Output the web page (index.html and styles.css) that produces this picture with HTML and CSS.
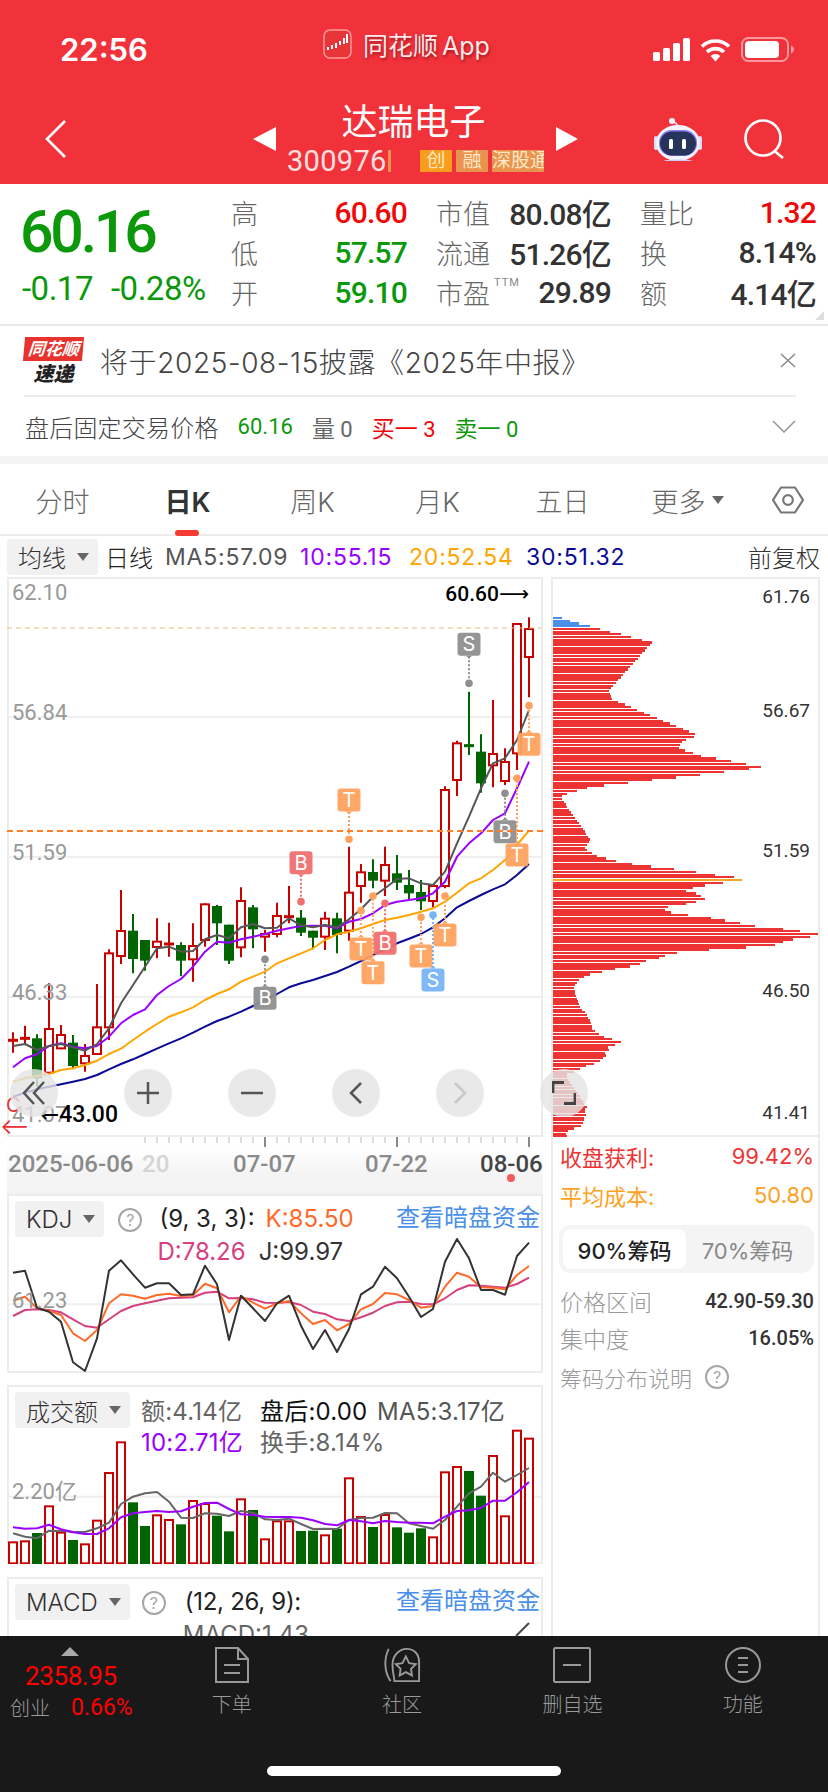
FILE: index.html
```html
<!DOCTYPE html>
<html lang="zh-CN">
<head>
  <meta charset="UTF-8" />
  <meta name="viewport" content="width=device-width, initial-scale=1" />
  <title>达瑞电子</title>
  <link rel="stylesheet" href="styles.css">
</head>
<body>

  <!-- Red header -->
  <header class="topbar">
    <div class="statusbar">
      <div class="time">22:56</div>
      <div class="app-badge">
        <svg class="app-icon" viewBox="0 0 29 30">
          <rect x="1" y="1" width="27" height="28" rx="6" fill="#e8353a" stroke="#ff9a9a" stroke-width="1.5"/>
          <path d="M5 18v3M9 16v4M13 14v5M17 12v4M21 9v6M24 5v9" stroke="#fff" stroke-width="2"/>
        </svg>
        <span>同花顺 App</span>
      </div>
      <div class="status-icons">
        <svg class="signal" viewBox="0 0 37 23" fill="#fff">
          <rect x="0" y="14" width="7" height="9" rx="1.5"/>
          <rect x="10" y="10" width="7" height="13" rx="1.5"/>
          <rect x="20" y="5" width="7" height="18" rx="1.5"/>
          <rect x="30" y="0" width="7" height="23" rx="1.5"/>
        </svg>
        <svg class="wifi" viewBox="0 0 31 24" fill="none" stroke="#fff" stroke-width="3.6">
          <path d="M2 8.5a19.5 19.5 0 0 1 27 0"/>
          <path d="M7 14a12.4 12.4 0 0 1 17 0"/>
          <path d="M15.5 23.5l-4.8-5.6a7 7 0 0 1 9.6 0z" fill="#fff" stroke="none"/>
        </svg>
        <svg class="battery" viewBox="0 0 53 25">
          <rect x="1" y="1" width="46" height="23" rx="6.5" fill="none" stroke="#fff" stroke-opacity=".5" stroke-width="2"/>
          <rect x="4" y="4" width="34" height="17" rx="4" fill="#fff"/>
          <path d="M50 8.5c2 .8 3 2.2 3 4s-1 3.2-3 4z" fill="#fff" fill-opacity=".5"/>
        </svg>
      </div>
    </div>

    <div class="navbar">
      <svg class="nav-back" viewBox="0 0 21 38" fill="none" stroke="#fff" stroke-width="2.6"><path d="M20 1L2 19l18 18"/></svg>
      <div class="nav-arrow prev"></div>
      <div class="stock">
        <div class="stock-name">达瑞电子</div>
        <div class="stock-meta">
          <span class="stock-code">300976</span>
          <i class="code-bar"></i>
          <span class="tag first">创</span>
          <span class="tag">融</span>
          <span class="tag long">深股通</span>
        </div>
      </div>
      <div class="nav-arrow next"></div>
      <svg class="robot" viewBox="0 0 48 44">
        <path d="M18 5c3 0 5 1 6 5" fill="none" stroke="#f1f2ff" stroke-width="1.6"/>
        <circle cx="18" cy="4" r="3" fill="#f1f2ff"/>
        <rect x="0" y="19" width="4" height="14" rx="2" fill="#d9ddf8"/>
        <rect x="44" y="19" width="4" height="14" rx="2" fill="#d9ddf8"/>
        <ellipse cx="24" cy="26" rx="22" ry="18" fill="#f3f4ff"/>
        <path d="M9 44c5-2 25-2 30 0-8 1-22 1-30 0z" fill="#c9cdf5"/>
        <rect x="5" y="13" width="38" height="26" rx="12.500" fill="#8f7bf0"/>
        <rect x="6" y="14.500" width="36" height="24" rx="12" fill="#26345c"/>
        <rect x="15" y="22" width="4" height="10" rx="1.500" fill="#fff"/>
        <rect x="28" y="22" width="4" height="10" rx="1.500" fill="#fff"/>
      </svg>
      <svg class="search" viewBox="0 0 40 40" fill="none" stroke="#fff" stroke-width="2.700"><circle cx="19" cy="19" r="17.500"/><path d="M31 32.500l8 6.500"/></svg>
    </div>
  </header>

  <!-- Price summary -->
  <section class="quote">
    <div class="price-box">
      <div class="price">60.16</div>
      <div class="change"><span>-0.17</span><span>-0.28%</span></div>
    </div>
    <div class="stats">
      <div class="stat"><span class="stat-title">高</span><span class="num up">60.60</span></div>
      <div class="stat"><span class="stat-title">市值</span><span class="num">80.08亿</span></div>
      <div class="stat"><span class="stat-title">量比</span><span class="num up">1.32</span></div>
      <div class="stat"><span class="stat-title">低</span><span class="num down">57.57</span></div>
      <div class="stat"><span class="stat-title">流通</span><span class="num">51.26亿</span></div>
      <div class="stat"><span class="stat-title">换</span><span class="num">8.14%</span></div>
      <div class="stat"><span class="stat-title">开</span><span class="num down">59.10</span></div>
      <div class="stat"><span class="stat-title">市盈<sup class="ttm">TTM</sup></span><span class="num">29.89</span></div>
      <div class="stat"><span class="stat-title">额</span><span class="num">4.14亿</span></div>
    </div>
    <i class="corner"></i>
  </section>

  <!-- Notice and after-hours row -->
  <section class="notice">
    <div class="notice-main">
      <div class="logo">
        <div class="logo-tag">同花顺</div>
        <div class="logo-word">速递</div>
      </div>
      <div class="notice-text">将于2025-08-15披露《2025年中报》</div>
      <svg class="notice-close" viewBox="0 0 16 15" fill="none" stroke="#8d8d8d" stroke-width="1.6"><path d="M1 1l14 13M15 1L1 14"/></svg>
    </div>
    <div class="after-hours">
      <span class="after-title">盘后固定交易价格</span>
      <span class="num down">60.16</span>
      <span class="after-vol">量 <span class="num">0</span></span>
      <span class="up">买一 <span class="num">3</span></span>
      <span class="down">卖一 <span class="num">0</span></span>
      <svg class="after-open" viewBox="0 0 24 13" fill="none" stroke="#9a9a9a" stroke-width="1.6"><path d="M1 1l11 11L23 1"/></svg>
    </div>
  </section>

  <!-- Period tabs -->
  <nav class="tabs">
    <div class="tab">分时</div>
    <div class="tab active">日K</div>
    <div class="tab">周K</div>
    <div class="tab">月K</div>
    <div class="tab">五日</div>
    <div class="tab">更多<i class="caret small"></i></div>
    <svg class="hexagon" viewBox="0 0 32 28" fill="none" stroke="#777" stroke-width="2.200"><path d="M9 1.500h14L31 14l-8 12.500H9L1 14z"/><circle cx="16" cy="14" r="4.800"/></svg>
  </nav>

  <div class="ma-row">
    <div class="chip">均线<i class="caret"></i></div>
    <span class="ma-period">日线</span>
    <span class="ma ma5">MA5:57.09</span>
    <span class="ma ma10">10:55.15</span>
    <span class="ma ma20">20:52.54</span>
    <span class="ma ma30">30:51.32</span>
    <span class="adjust">前复权</span>
  </div>

  <main class="charts">
    <div class="left-col">
      <div class="panel kline">
        <svg id="klineChart" class="chart"></svg>
        <span class="axis-label l1">62.10</span>
        <span class="axis-label l2">56.84</span>
        <span class="axis-label l3">51.59</span>
        <span class="axis-label l4">46.33</span>
        <span class="axis-label l5">41.07</span>
        <span class="extreme high">60.60⟶</span>
        <span class="extreme low">←43.00</span>
        <span class="cursor-mark">C</span>
        <span class="cursor-arrow">⟵</span>
      </div>
      <svg id="timeAxis" class="time-axis"></svg>

      <div class="panel kdj">
        <svg id="kdjChart" class="chart"></svg>
        <div class="panel-head">
          <div class="chip">KDJ<i class="caret"></i></div>
          <span class="help">?</span>
          <div class="readings">
            <div><span class="params">(9, 3, 3):</span><span class="kdj-k">K:85.50</span></div>
            <div class="second"><span class="kdj-d">D:78.26</span><span class="kdj-j">J:99.97</span></div>
          </div>
          <span class="dark-pool">查看暗盘资金</span>
        </div>
        <span class="axis-label kdj-label">61.23</span>
      </div>

      <div class="panel volume">
        <svg id="volumeChart" class="chart"></svg>
        <div class="panel-head">
          <div class="chip">成交额<i class="caret"></i></div>
          <div class="readings vol-readings">
            <span class="vol-grey">额:4.14亿</span><span class="vol-black">盘后:0.00</span><span class="vol-ma">MA5:3.17亿</span>
            <span class="ma10">10:2.71亿</span><span class="vol-grey">换手:8.14%</span>
          </div>
        </div>
        <span class="axis-label vol-label">2.20亿</span>
      </div>

      <div class="panel macd">
        <svg id="macdChart" class="chart"></svg>
        <div class="panel-head">
          <div class="chip">MACD<i class="caret"></i></div>
          <span class="help">?</span>
          <div class="readings">
            <div><span class="params">(12, 26, 9):</span></div>
            <div class="second"><span class="vol-grey">MACD:1.43</span></div>
          </div>
          <span class="dark-pool">查看暗盘资金</span>
        </div>
      </div>
    </div>

    <div class="right-col">
      <div class="chips-panel">
        <svg id="chipChart" class="chart"></svg>
        <span class="chip-label c1">61.76</span>
        <span class="chip-label c2">56.67</span>
        <span class="chip-label c3">51.59</span>
        <span class="chip-label c4">46.50</span>
        <span class="chip-label c5">41.41</span>
      </div>
      <div class="chip-row profit"><span>收盘获利:</span><span>99.42%</span></div>
      <div class="chip-row cost"><span>平均成本:</span><span>50.80</span></div>
      <div class="segment">
        <div class="segment-item active">90%筹码</div>
        <div class="segment-item">70%筹码</div>
      </div>
      <div class="chip-row info"><span>价格区间</span><span class="info-value">42.90-59.30</span></div>
      <div class="chip-row info"><span>集中度</span><span class="info-value">16.05%</span></div>
      <div class="chip-help">筹码分布说明<span class="help">?</span></div>
    </div>

    <!-- Floating zoom and pan buttons -->
    <div class="zoom-controls">
      <div class="round first"><svg viewBox="0 0 24 24" fill="none" stroke="#555" stroke-width="2.500"><path d="M12 1L2 12l10 11M22 1L12 12l10 11"/></svg></div>
      <div class="round"><svg viewBox="0 0 24 24" fill="none" stroke="#555" stroke-width="2.500"><path d="M1 12h22M12 1v22"/></svg></div>
      <div class="round"><svg viewBox="0 0 24 24" fill="none" stroke="#555" stroke-width="2.500"><path d="M1 12h22"/></svg></div>
      <div class="round"><svg viewBox="0 0 24 24" fill="none" stroke="#555" stroke-width="2.500"><path d="M17 2L7 12l10 10"/></svg></div>
      <div class="round"><svg viewBox="0 0 24 24" fill="none" stroke="#c8c8c8" stroke-width="2.500"><path d="M7 2l10 10L7 22"/></svg></div>
      <div class="round"><svg viewBox="0 0 24 24" fill="none" stroke="#444" stroke-width="2.800"><path d="M1 12V1.500h11M23 12v10.500H12"/></svg></div>
    </div>
  </main>

  <!-- Bottom dock -->
  <footer class="dock">
    <div class="dock-row">
      <div class="index-box">
        <i class="index-arrow"></i>
        <div class="index-value">2358.95</div>
        <div class="index-line"><span class="index-name">创业</span><span class="index-pct">0.66%</span></div>
      </div>
      <div class="dock-item">
        <svg viewBox="0 0 36 36" fill="none" stroke="#999" stroke-width="2"><path d="M2 1h22l10 11v23H2zM24 1v11h10M10 18h16M10 26h16"/></svg>
        <span>下单</span>
      </div>
      <div class="dock-item">
        <svg viewBox="0 0 40 36" fill="none" stroke="#999" stroke-width="2"><path d="M6 1C1 11 1 25 8 35"/><path d="M12 35h26V15C38 6 32 1 25 1S10 7 10 18c0 8 2 13 2 17z"/><path d="M24 9l3.500 7 7 1-5 5 1 7-6.500-3.500L17.500 29l1-7-5-5 7-1z"/></svg>
        <span>社区</span>
      </div>
      <div class="dock-item">
        <svg viewBox="0 0 38 36" fill="none" stroke="#999" stroke-width="2"><rect x="1" y="1" width="36" height="34" rx="1.500"/><path d="M10 18h18"/></svg>
        <span>删自选</span>
      </div>
      <div class="dock-item">
        <svg viewBox="0 0 36 36" fill="none" stroke="#999" stroke-width="2"><circle cx="18" cy="18" r="17"/><path d="M13 11h10M13 18h10M13 25h10"/></svg>
        <span>功能</span>
      </div>
    </div>
    <div class="home-indicator"></div>
  </footer>

  <script src="chart.js"></script>
</body>
</html>
```

FILE: styles.css
```css
* {
  box-sizing: border-box;
}

body {
  width: 828px;
  height: 1792px;
  margin: 0;
  overflow: hidden;
  background-color: #fff;
  color: #333;
  font-family: Inter, "Noto Sans CJK SC", sans-serif;
}

i {
  display: block;
  font-style: normal;
}

.up {
  color: #f00808;
}

.down {
  color: #0b990b;
}

.num {
  font-family: Roboto, "Noto Sans CJK SC", sans-serif;
}

/* Header */
.topbar {
  height: 184px;
  background-color: #f2323b;
  color: #fff;
}

.statusbar {
  display: flex;
  align-items: center;
  height: 76px;
  padding: 23px 0 0 60px;
}

.time {
  width: 263px;
  font-size: 31px;
  font-weight: 600;
}

.app-badge {
  display: flex;
  align-items: center;
  width: 330px;
  margin-top: -12px;
  font-size: 25px;
  word-spacing: -3px;
  color: rgba(255, 255, 255, 0.92);
  text-shadow: 1px 2px 3px rgba(80, 0, 0, 0.5);
}

.app-icon {
  width: 29px;
  height: 30px;
  margin-right: 11px;
}

.status-icons {
  display: flex;
  align-items: center;
  gap: 10px;
}

.signal {
  width: 37px;
  height: 23px;
}

.wifi {
  width: 31px;
  height: 24px;
}

.battery {
  width: 53px;
  height: 25px;
}

.navbar {
  display: flex;
  align-items: center;
  height: 108px;
  padding-top: 17px;
}

.nav-back {
  width: 21px;
  height: 38px;
  margin-left: 45px;
}

.nav-arrow {
  width: 0;
  height: 0;
  border-top: 12.5px solid transparent;
  border-bottom: 12.5px solid transparent;
}

.nav-arrow.prev {
  margin-left: 187px;
  border-right: 23px solid #fff;
}

.nav-arrow.next {
  margin-left: 11px;
  border-left: 22px solid #fff;
}

.stock {
  width: 258px;
  margin-left: 11px;
}

.stock-name {
  margin: -4px 0 4px;
  padding-right: 5px;
  font-size: 36px;
  line-height: 44px;
  text-align: center;
}

.stock-meta {
  display: flex;
  align-items: center;
  height: 24px;
  margin-top: 5px;
  overflow: hidden;
}

.stock-code {
  width: 101px;
  font-family: Roboto, sans-serif;
  font-size: 29px;
  letter-spacing: 0.3px;
  color: #ffe0e0;
}

.code-bar {
  width: 3px;
  height: 22px;
  margin-right: 29px;
  background-color: #e8944e;
}

.tag {
  flex: none;
  width: 32px;
  height: 22px;
  margin-right: 4px;
  overflow: hidden;
  background-color: #e8944e;
  color: #ffe8c8;
  font-size: 19px;
  line-height: 22px;
  text-align: center;
}

.tag.first {
  background-color: #fa9d1c;
}

.tag.long {
  width: 52px;
  margin-right: 0;
  white-space: nowrap;
  text-align: left;
}

.robot {
  width: 48px;
  height: 44px;
  margin-left: 76px;
}

.search {
  width: 40px;
  height: 40px;
  margin-left: 42px;
}

/* Price summary */
.quote {
  position: relative;
  display: flex;
  height: 142px;
  border-bottom: 2px solid #e8e8e8;
}

.price-box {
  width: 231px;
  padding-left: 20px;
}

.price {
  margin-top: 17px;
  font-family: Roboto, sans-serif;
  font-size: 59px;
  font-weight: 500;
  line-height: 62px;
  letter-spacing: -3.200px;
  color: #0b990b;
}

.change {
  display: flex;
  gap: 18px;
  margin: 8px 0 0 2px;
  font-family: Roboto, sans-serif;
  font-size: 33px;
  letter-spacing: -0.500px;
  line-height: 36px;
  color: #0b990b;
}

.stats {
  display: grid;
  grid-template-columns: 176px 175px 176px;
  grid-auto-rows: 40px;
  column-gap: 29px;
  padding-top: 8px;
}

.stat {
  display: flex;
  justify-content: space-between;
  align-items: center;
}

.stat .num {
  font-size: 30px;
  font-weight: 500;
  letter-spacing: -0.800px;
}

.stat-title {
  position: relative;
  font-size: 27px;
  font-weight: 300;
  color: #666;
}

.ttm {
  position: absolute;
  left: 58px;
  top: 3px;
  font-family: Roboto, sans-serif;
  font-size: 11px;
  font-weight: 400;
  letter-spacing: 1px;
  color: #888;
}

.corner {
  position: absolute;
  right: 4px;
  bottom: 4px;
  border-left: 9px solid transparent;
  border-bottom: 9px solid #ddd;
}

/* Notice */
.notice-main {
  display: flex;
  align-items: center;
  height: 71px;
  margin: 0 32px 0 24px;
  border-bottom: 2px solid #ececec;
}

.logo {
  width: 59px;
  margin-right: 17px;
  text-align: center;
}

.logo-tag {
  height: 24px;
  background-color: #e8322d;
  color: #fff;
  font-size: 17px;
  font-style: italic;
  font-weight: 700;
  line-height: 24px;
  transform: skewX(-5deg);
}

.logo-word {
  margin-top: 2px;
  font-size: 20px;
  font-style: italic;
  font-weight: 900;
  line-height: 22px;
  color: #222;
}

.notice-text {
  flex: 1;
  font-size: 28px;
  font-weight: 300;
  letter-spacing: 0.600px;
  color: #444;
  white-space: nowrap;
}

.notice-close {
  width: 16px;
  height: 15px;
}

.after-hours {
  display: flex;
  align-items: center;
  height: 59px;
  padding: 0 32px 0 25px;
  font-size: 23px;
  word-spacing: -1px;
}

.after-hours > span {
  margin-right: 19px;
}

.after-title {
  font-size: 24px;
  font-weight: 300;
  letter-spacing: 0.200px;
  color: #444;
}

.after-hours .num {
  font-size: 22px;
}

.after-vol {
  color: #666;
}

.after-open {
  width: 24px;
  height: 13px;
  margin-left: auto;
}

/* Tabs */
.tabs {
  display: flex;
  align-items: center;
  height: 80px;
  padding-top: 8px;
  border-top: 8px solid #f4f4f4;
  border-bottom: 2px solid #ececec;
  font-size: 27px;
  font-weight: 300;
  color: #666;
}

.tab {
  position: relative;
  display: flex;
  justify-content: center;
  align-items: center;
  width: 125px;
  height: 62px;
  padding-bottom: 6px;
}

.tab.active {
  font-weight: 600;
  color: #333;
}

.tab.active::after {
  content: "";
  position: absolute;
  left: 50px;
  bottom: -2px;
  width: 24px;
  height: 6px;
  border-radius: 3px;
  background-color: #f43a32;
}

.hexagon {
  width: 32px;
  height: 28px;
  margin: -6px 0 0 22px;
}

.caret {
  width: 0;
  height: 0;
  margin-left: 11px;
  border-left: 6px solid transparent;
  border-right: 6px solid transparent;
  border-top: 8px solid #666;
}

.caret.small {
  margin-left: 6px;
}

/* Moving average row */
.ma-row {
  display: flex;
  align-items: center;
  height: 41px;
  padding: 0 8px 0 7px;
  font-size: 23px;
  white-space: nowrap;
}

.chip {
  display: flex;
  align-items: center;
  height: 36px;
  padding: 0 9px 0 11px;
  border-radius: 4px;
  background-color: #f1f1f1;
  color: #333;
  font-size: 24px;
  font-weight: 300;
}

.ma-period {
  margin: 0 12px 0 7px;
  font-size: 24px;
  font-weight: 300;
  color: #222;
}

.ma {
  letter-spacing: 0.800px;
}

.ma5 {
  width: 135px;
  color: #555;
}

.ma10 {
  width: 109px;
  color: #9a00ff;
}

.ma20 {
  width: 117px;
  color: #ffa500;
}

.ma30 {
  color: #0a0a96;
}

.adjust {
  margin-left: auto;
  font-size: 24px;
  font-weight: 300;
}

/* Chart columns */
.charts {
  position: relative;
  display: flex;
  height: 1059px;
  overflow: hidden;
}

.left-col {
  width: 536px;
  margin-left: 7px;
}

.right-col {
  width: 269px;
  margin-left: 8px;
  border-right: 2px solid #ececec;
  border-left: 2px solid #ececec;
}

.panel {
  position: relative;
  border: 2px solid #ececec;
}

.chart {
  position: absolute;
  top: -2px;
  left: -2px;
  width: 536px;
}

.kline {
  height: 560px;
}

.kline .chart {
  height: 560px;
}

.axis-label {
  position: absolute;
  left: 3px;
  font-family: Roboto, "Noto Sans CJK SC", sans-serif;
  font-size: 22px;
  line-height: 26px;
  color: #999;
}

.l1 { top: 1px; }
.l2 { top: 121px; }
.l3 { top: 261px; }
.l4 { top: 401px; }
.l5 { top: 523px; }

.extreme {
  position: absolute;
  font-family: Roboto, "DejaVu Sans", sans-serif;
  line-height: 26px;
  color: #000;
}

.extreme.high {
  top: 2px;
  right: 12px;
  font-size: 21px;
  font-weight: 500;
}

.extreme.low {
  top: 523px;
  left: 31px;
  font-size: 23px;
  font-weight: 500;
}

.cursor-mark {
  position: absolute;
  top: 514px;
  left: -3px;
  font-size: 20px;
  line-height: 24px;
  color: #e8303a;
}

.cursor-arrow {
  position: absolute;
  top: 535px;
  left: -9px;
  font-size: 22px;
  line-height: 24px;
  color: #e8303a;
}

.time-axis {
  display: block;
  width: 536px;
  height: 57px;
  background: linear-gradient(#fff 20%, #f3f3f3 70%);
}

.kdj {
  height: 179px;
}

.kdj .chart,
.volume .chart {
  height: 179px;
}

.volume {
  height: 179px;
  margin-top: 12px;
}

.macd {
  height: 80px;
  margin-top: 13px;
}

.macd .chart {
  height: 80px;
}

.panel-head {
  position: relative;
  display: flex;
  align-items: flex-start;
  padding: 5px 1px 0 6px;
  font-size: 24px;
  white-space: nowrap;
}

.help {
  display: block;
  flex: none;
  width: 24px;
  height: 24px;
  margin: 7px 17px 0 14px;
  border: 2px solid #a6a6a6;
  border-radius: 50%;
  color: #a6a6a6;
  font-size: 16px;
  font-weight: 400;
  line-height: 20px;
  text-align: center;
}

.macd .help {
  margin: 7px 19px 0 12px;
}

.readings {
  margin-top: 1px;
  line-height: 33px;
}

.readings > div {
  display: flex;
  height: 33px;
}

.readings > .second {
  margin-left: -2px;
}

.params {
  margin-right: 11px;
  color: #222;
}

.macd .params {
  letter-spacing: -0.300px;
}

.kdj-k {
  color: #ff6a2b;
}

.kdj-d {
  margin-right: 13px;
  color: #d6407f;
}

.kdj-j {
  color: #333;
}

.dark-pool {
  margin-left: auto;
  color: #4a90e8;
  font-size: 24px;
  line-height: 33px;
}

.kdj-label {
  top: 92px;
}

.vol-readings {
  display: grid;
  grid-template-columns: 119px 117px auto;
  grid-auto-rows: 31px;
  margin: 4px 0 0 11px;
  letter-spacing: 0.200px;
  line-height: 31px;
}

.vol-readings .ma10 {
  width: auto;
}

.vol-grey {
  color: #666;
}

.vol-black {
  color: #111;
}

.vol-ma {
  color: #555;
}

.vol-label {
  top: 92px;
}

/* Chip distribution column */
.chips-panel {
  position: relative;
  height: 560px;
  border-top: 2px solid #ececec;
  border-bottom: 2px solid #ececec;
}

.chips-panel .chart {
  top: -2px;
  left: 0;
  width: 265px;
  height: 560px;
  shape-rendering: crispEdges;
}

.chip-label {
  position: absolute;
  right: 8px;
  font-family: Roboto, sans-serif;
  font-size: 19px;
  line-height: 22px;
  color: #333;
}

.c1 { top: 7px; }
.c2 { top: 121px; }
.c3 { top: 261px; }
.c4 { top: 401px; }
.c5 { top: 523px; }

.chip-row {
  display: flex;
  justify-content: space-between;
  align-items: center;
  padding: 0 4px 0 7px;
  font-size: 22px;
}

.profit {
  height: 38px;
  color: #ee3333;
}

.cost {
  height: 38px;
  margin-top: 1px;
  color: #ffa11f;
}

.segment {
  display: flex;
  height: 48px;
  margin: 11px 4px 9px 6px;
  padding: 4px;
  border-radius: 12px;
  background-color: #f4f4f4;
  font-size: 22px;
  color: #888;
}

.segment-item {
  display: flex;
  justify-content: center;
  align-items: center;
  width: 123px;
  border-radius: 8px;
}

.segment-item.active {
  background-color: #fff;
  font-weight: 500;
  color: #222;
}

.info {
  height: 37px;
  color: #999;
  font-size: 23px;
  font-weight: 300;
}

.info-value {
  font-family: Roboto, sans-serif;
  font-size: 20px;
  font-weight: 500;
  color: #333;
}

.chip-help {
  display: flex;
  align-items: center;
  height: 38px;
  margin-top: 2px;
  padding-left: 7px;
  font-size: 22px;
  font-weight: 300;
  color: #999;
}

.chip-help .help {
  margin: 0 0 0 13px;
}

.zoom-controls {
  position: absolute;
  top: 492px;
  left: 10px;
  display: flex;
  gap: 56px;
}

.round {
  display: flex;
  justify-content: center;
  align-items: center;
  width: 48px;
  height: 48px;
  border-radius: 50%;
  background-color: rgba(228, 228, 228, 0.82);
}

.round.first {
  margin-right: 10px;
}

.round svg {
  width: 24px;
  height: 24px;
}

/* Dock */
.dock {
  height: 156px;
  background-color: #191919;
  color: #999;
}

.dock-row {
  display: flex;
  height: 130px;
  padding-top: 11px;
}

.index-box {
  width: 137px;
  margin-left: 10px;
}

.index-arrow {
  width: 0;
  height: 0;
  margin-left: 51px;
  border-left: 9px solid transparent;
  border-right: 9px solid transparent;
  border-bottom: 9px solid #aaa;
}

.index-value {
  margin: 3px 0 0 15px;
  font-family: Roboto, sans-serif;
  font-size: 26px;
  letter-spacing: -0.400px;
  line-height: 34px;
  color: #f00;
}

.index-line {
  display: flex;
  align-items: center;
  height: 30px;
  margin-top: -1px;
}

.index-name {
  width: 61px;
  font-size: 20px;
  font-weight: 300;
}

.index-pct {
  font-family: Roboto, sans-serif;
  font-size: 23px;
  color: #f00;
}

.dock-item {
  display: flex;
  flex-direction: column;
  align-items: center;
  width: 171px;
  font-size: 20px;
  font-weight: 300;
}

.dock-item svg {
  width: 38px;
  height: 36px;
  margin-bottom: 6px;
}

.home-indicator {
  width: 294px;
  height: 10px;
  margin-left: 267px;
  border-radius: 5px;
  background-color: #fff;
}
```

FILE: chart.js
```js
// Builds the SVG charts on the daily K page from the arrays below.
// Vertical values are stored in thirds of a pixel; each panel has its own
// offset function. Every series has one value per trading day.

const DAYS = 44;
const dayX = i => 6 + i * 12;

const RED = '#c80000';
const GREEN = '#006400';

const klineY = v => 243 + v / 3;
const kdjY = v => -14 + v / 3;
const volumeY = v => -5 + v / 3;

// [direction, wick top, body top, body bottom, wick bottom]
const candles = [
  ['u', 637, 661, 661, 698], ['u', 617, 655, 655, 675], ['d', 643, 655, 775, 800],
  ['u', 490, 627, 758, 760], ['u', 615, 645, 685, 688], ['d', 645, 668, 738, 748],
  ['u', 672, 708, 730, 755], ['u', 492, 622, 702, 703], ['u', 388, 400, 622, 660],
  ['u', 210, 333, 408, 432], ['d', 282, 332, 417, 460], ['d', 360, 360, 422, 452],
  ['u', 295, 365, 381, 415], ['u', 308, 372, 372, 410], ['d', 367, 375, 422, 468],
  ['u', 310, 378, 418, 485], ['u', 250, 253, 360, 380], ['d', 255, 258, 310, 375],
  ['d', 314, 314, 422, 432], ['u', 202, 243, 382, 412], ['d', 255, 262, 328, 385],
  ['u', 330, 342, 350, 395], ['u', 248, 288, 342, 352], ['u', 198, 290, 290, 310],
  ['d', 270, 293, 338, 348], ['d', 332, 332, 353, 388], ['u', 275, 296, 350, 390],
  ['d', 278, 295, 345, 400], ['u', 80, 218, 332, 362], ['u', 132, 157, 198, 248],
  ['d', 118, 156, 182, 205], ['u', 80, 135, 182, 228], ['d', 105, 160, 188, 210],
  ['d', 150, 195, 220, 240], ['d', 180, 216, 244, 270], ['u', 198, 198, 243, 262],
  ['u', -101, -90, 198, 205], ['u', -238, -230, -120, -72], ['d', -385, -223, -223, -195],
  ['d', -257, -205, -110, -82], ['u', -360, -198, -164, -98], ['u', -215, -174, -117, -105],
  ['u', -588, -588, -200, -150], ['u', -608, -573, -489, -368]
];

const ma5 = [678, 672, 690, 678, 672, 682, 692, 672, 625, 550, 495, 440, 385, 380, 395, 393, 358, 345, 355, 322, 312, 325, 323, 295, 316, 322, 315, 322, 298, 268, 230, 205, 177, 175, 190, 195, 155, 70, -10, -95, -170, -185, -240, -330];
const ma10 = [742, 715, 703, 678, 670, 680, 685, 678, 650, 610, 585, 568, 525, 498, 477, 440, 395, 365, 368, 358, 350, 342, 332, 325, 318, 317, 317, 325, 305, 297, 280, 255, 245, 240, 235, 220, 185, 110, 70, 40, 0, -20, -95, -175];
const ma20 = [785, 775, 768, 762, 750, 745, 735, 722, 702, 686, 660, 635, 612, 590, 577, 562, 540, 522, 508, 485, 470, 455, 430, 415, 400, 385, 360, 343, 335, 325, 312, 300, 293, 285, 275, 265, 245, 218, 190, 175, 150, 120, 75, 32];
const ma30 = [830, 818, 808, 800, 793, 785, 777, 765, 748, 732, 718, 702, 686, 670, 655, 638, 620, 603, 590, 575, 558, 540, 522, 502, 490, 480, 468, 456, 440, 423, 405, 388, 370, 356, 342, 322, 295, 262, 243, 225, 208, 193, 165, 132];

// [day, letter, colour, badge centre, dot]
const ORANGE_MARK = '#ffa25f';
const RED_MARK = '#f07070';
const GREY_MARK = '#8f8f8f';
const BLUE_MARK = '#78b4f5';
const markers = [
  [38, 'S', GREY_MARK, -527, -410],
  [28, 'T', ORANGE_MARK, -60, 58],
  [43, 'T', ORANGE_MARK, -227, -343],
  [24, 'B', RED_MARK, 128, 245],
  [21, 'B', GREY_MARK, 535, 418],
  [29, 'T', ORANGE_MARK, 387, 272],
  [30, 'T', ORANGE_MARK, 458, 228],
  [31, 'B', RED_MARK, 370, 250],
  [34, 'T', ORANGE_MARK, 408, 292],
  [35, 'S', BLUE_MARK, 480, 285],
  [36, 'T', ORANGE_MARK, 345, 228],
  [41, 'B', GREY_MARK, 35, -80],
  [42, 'T', ORANGE_MARK, 105, -125]
];

const kdjJ = [278, 272, 383, 395, 425, 547, 573, 475, 272, 241, 283, 323, 310, 310, 345, 343, 257, 313, 480, 347, 385, 423, 370, 347, 437, 507, 450, 516, 447, 343, 320, 260, 295, 350, 411, 387, 245, 177, 235, 330, 330, 344, 228, 188];
const kdjK = [362, 350, 385, 392, 405, 460, 483, 450, 370, 343, 347, 356, 345, 341, 348, 346, 311, 325, 397, 348, 368, 386, 370, 363, 400, 432, 420, 451, 432, 388, 372, 339, 343, 360, 383, 378, 320, 278, 290, 322, 323, 328, 285, 258];
const kdjD = [408, 390, 388, 390, 397, 418, 438, 443, 418, 393, 378, 370, 362, 355, 353, 352, 338, 335, 355, 354, 358, 368, 369, 366, 375, 395, 402, 418, 423, 412, 398, 378, 367, 365, 372, 373, 355, 330, 316, 317, 320, 323, 312, 293];

// Bar tops; the bar colour follows the candle of the same day.
const volumes = [487, 484, 459, 379, 458, 480, 493, 422, 279, 187, 367, 438, 406, 420, 433, 363, 372, 407, 454, 358, 390, 478, 424, 424, 453, 452, 466, 446, 295, 411, 441, 405, 442, 458, 445, 472, 277, 261, 273, 347, 228, 409, 152, 176];
const volumeMa5 = [460, 470, 475, 452, 453, 455, 456, 445, 428, 372, 350, 340, 336, 365, 413, 414, 400, 401, 408, 393, 398, 418, 420, 416, 432, 447, 446, 447, 420, 414, 413, 399, 400, 430, 438, 446, 420, 380, 340, 320, 278, 305, 285, 264];
const volumeMa10 = [442, 446, 445, 434, 448, 457, 462, 462, 445, 412, 400, 396, 393, 396, 394, 380, 369, 368, 387, 403, 405, 410, 411, 411, 413, 421, 432, 436, 420, 424, 430, 423, 426, 428, 428, 430, 410, 393, 391, 384, 362, 362, 337, 306];

// Chip distribution: right edge of each row, top row first.
const chipRows = [63, 87, 114, 147, 177, 207, 240, 270, 303, 333, 327, 318, 312, 303, 297, 291, 282, 276, 267, 261, 252, 246, 240, 231, 225, 216, 210, 204, 207, 210, 213, 231, 252, 270, 288, 309, 327, 348, 366, 387, 405, 426, 444, 462, 459, 435, 423, 417, 414, 432, 456, 480, 525, 570, 615, 660, 624, 549, 477, 405, 333, 261, 189, 138, 108, 78, 63, 63, 69, 75, 78, 84, 90, 96, 102, 108, 114, 120, 126, 132, 135, 141, 147, 144, 138, 132, 138, 153, 168, 195, 225, 273, 330, 399, 465, 522, 579, 603, 546, 492, 456, 435, 465, 480, 492, 465, 435, 381, 372, 390, 441, 510, 552, 597, 642, 726, 777, 837, 807, 756, 726, 702, 615, 504, 408, 372, 354, 315, 297, 267, 222, 183, 147, 129, 114, 108, 102, 99, 102, 102, 105, 108, 111, 114, 117, 123, 132, 138, 141, 147, 150, 153, 153, 162, 174, 189, 213, 240, 222, 201, 204, 192, 195, 186, 177, 159, 135, 117, 99, 78, 78, 81, 87, 93, 99, 105, 111, 117, 120, 126, 129, 138, 132, 132, 135, 129, 129, 126, 120, 99, 81, 75, 78];
const COST_ROW = 97;

function add(parent, name, attrs, text) {
  const node = document.createElementNS('http://www.w3.org/2000/svg', name);
  for (const [key, value] of Object.entries(attrs)) {
    node.setAttribute(key, value);
  }
  if (text) node.textContent = text;
  parent.appendChild(node);
  return node;
}

function setupSvg(id, height) {
  const svg = document.getElementById(id);
  svg.setAttribute('viewBox', `0 0 536 ${height}`);
  return svg;
}

function gridLine(svg, y) {
  add(svg, 'line', { x1: 2, x2: 534, y1: y, y2: y, stroke: '#efefef', 'stroke-width': 2 });
}

function series(svg, values, toY, colour, width) {
  const points = values.map((v, i) => `${dayX(i)},${toY(v).toFixed(1)}`).join(' ');
  add(svg, 'polyline', { points, fill: 'none', stroke: colour, 'stroke-width': width, 'stroke-linejoin': 'round' });
}

function drawCandle(svg, candle, i) {
  const [dir, wickTop, bodyTop, bodyBottom, wickBottom] = candle;
  const x = dayX(i);
  const colour = dir === 'u' ? RED : GREEN;
  const wick = (a, b) => add(svg, 'line', { x1: x, x2: x, y1: klineY(a), y2: klineY(b), stroke: colour, 'stroke-width': 2 });

  if (bodyTop === bodyBottom) {
    wick(wickTop, wickBottom);
    add(svg, 'line', { x1: x - 5, x2: x + 5, y1: klineY(bodyTop), y2: klineY(bodyTop), stroke: colour, 'stroke-width': 3 });
  } else if (dir === 'u') {
    wick(wickTop, bodyTop);
    wick(bodyBottom, wickBottom);
    add(svg, 'rect', { x: x - 4, y: klineY(bodyTop), width: 8, height: (bodyBottom - bodyTop) / 3, fill: '#fff', stroke: colour, 'stroke-width': 2 });
  } else {
    wick(wickTop, wickBottom);
    add(svg, 'rect', { x: x - 5, y: klineY(bodyTop), width: 10, height: (bodyBottom - bodyTop) / 3, fill: colour });
  }
}

function drawMarker(svg, marker) {
  const [day, letter, colour, badge, dot] = marker;
  const x = dayX(day);
  const badgeY = klineY(badge);
  const dotY = klineY(dot);
  const dir = dotY > badgeY ? 1 : -1;

  add(svg, 'line', { x1: x, x2: x, y1: badgeY + dir * 12, y2: dotY, stroke: colour, 'stroke-width': 2, 'stroke-dasharray': '2 2' });
  add(svg, 'circle', { cx: x, cy: dotY, r: 3.8, fill: colour });
  add(svg, 'rect', { x: x - 11.5, y: badgeY - 11.5, width: 23, height: 23, rx: 3, fill: colour, 'fill-opacity': 0.95 });
  add(svg, 'path', { d: `M${x - 3} ${badgeY + dir * 11.5}h6l-3 ${dir * 3}z`, fill: colour });
  add(svg, 'text', { x, y: badgeY + 7, 'text-anchor': 'middle', fill: '#fff', 'font-size': 20, 'font-family': 'Inter, sans-serif' }, letter);
}

function drawKline() {
  const svg = setupSvg('klineChart', 560);
  [140, 280, 420].forEach(y => gridLine(svg, y));
  candles.forEach((c, i) => drawCandle(svg, c, i));

  series(svg, ma30, klineY, '#0a0a96', 2);
  series(svg, ma20, klineY, '#ffa500', 2);
  series(svg, ma10, klineY, '#9a00ff', 2);
  series(svg, ma5, klineY, '#555', 2);

  markers.forEach(m => drawMarker(svg, m));

  add(svg, 'line', { x1: 0, x2: 534, y1: 51, y2: 51, stroke: '#e8b880', 'stroke-width': 1, 'stroke-dasharray': '5 4' });
  add(svg, 'line', { x1: 0, x2: 536, y1: 254, y2: 254, stroke: '#ff7f27', 'stroke-width': 2, 'stroke-dasharray': '6 4' });
}

function drawTimeAxis() {
  const svg = setupSvg('timeAxis', 57);
  for (let i = 11; i < DAYS; i++) {
    const major = i === 21 || i === 32 || i === 43;
    add(svg, 'line', { x1: dayX(i), x2: dayX(i), y1: 0, y2: major ? 10 : 6, stroke: major ? '#888' : '#bbb', 'stroke-width': major ? 2 : 1 });
  }
  const label = (x, text, colour) => add(svg, 'text', { x, y: 35, fill: colour, 'font-size': 24, 'font-family': 'Roboto, sans-serif', 'font-weight': 500 }, text);
  label(1, '2025-06-06', '#8a8a8a');
  label(135, '20', '#d4d4d4');
  label(226, '07-07', '#8a8a8a');
  label(358, '07-22', '#8a8a8a');
  label(473, '08-06', '#444');
  add(svg, 'circle', { cx: 504, cy: 41, r: 4, fill: '#f25b5b' });
}

function drawKdj() {
  const svg = setupSvg('kdjChart', 179);
  gridLine(svg, kdjY(373));
  series(svg, kdjD, kdjY, '#d6407f', 2);
  series(svg, kdjK, kdjY, '#ff6a2b', 2);
  series(svg, kdjJ, kdjY, '#333', 2);
}

function drawVolume() {
  const svg = setupSvg('volumeChart', 179);
  const base = volumeY(550);
  gridLine(svg, volumeY(350));
  volumes.forEach((top, i) => {
    const y = volumeY(top);
    if (candles[i][0] === 'u') {
      add(svg, 'rect', { x: dayX(i) - 4, y, width: 8, height: base - y, fill: '#fff', stroke: RED, 'stroke-width': 2 });
    } else {
      add(svg, 'rect', { x: dayX(i) - 5, y, width: 10, height: base - y + 1, fill: GREEN });
    }
  });
  series(svg, volumeMa5, volumeY, '#666', 2);
  series(svg, volumeMa10, volumeY, '#9a00ff', 2);
}

function drawMacd() {
  const svg = setupSvg('macdChart', 80);
  add(svg, 'line', { x1: 509, x2: 522, y1: 59, y2: 46, stroke: '#444', 'stroke-width': 2 });
}

function drawChips() {
  const svg = document.getElementById('chipChart');
  svg.setAttribute('viewBox', '0 0 265 560');
  chipRows.forEach((edge, i) => {
    let colour = '#ee3333';
    if (i < 4) colour = '#4a90e8';
    if (i === COST_ROW) colour = '#f5a623';
    add(svg, 'rect', { x: 0, y: 40 + i * 2.7, width: (edge - 36) / 3, height: 2.2, fill: colour });
  });
}

drawKline();
drawTimeAxis();
drawKdj();
drawVolume();
drawMacd();
drawChips();
```
